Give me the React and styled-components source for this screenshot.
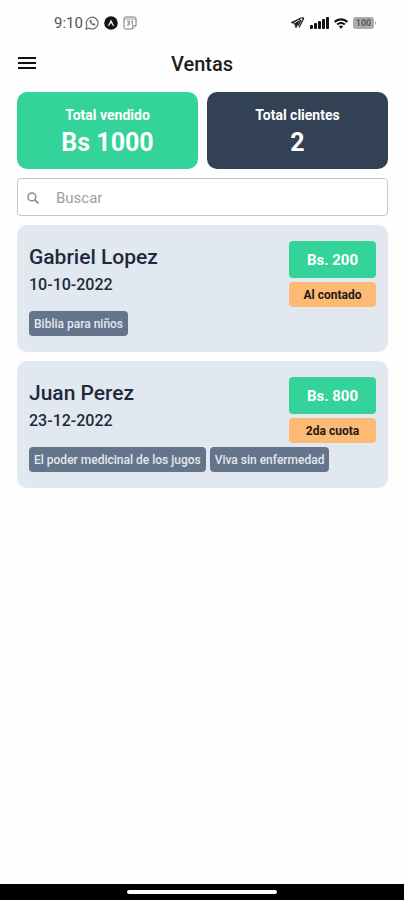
import React, { useState } from 'react';
import styled, { createGlobalStyle } from 'styled-components';

const GlobalStyle = createGlobalStyle`
  * {
    box-sizing: border-box;
  }
  body {
    margin: 0;
    background: #fefefe;
    font-family: Roboto, 'Liberation Sans', sans-serif;
    color: #1e293b;
  }
`;

const Screen = styled.div`
  min-height: 100vh;
  display: flex;
  flex-direction: column;
`;

const StatusBar = styled.div`
  display: flex;
  align-items: center;
  justify-content: space-between;
  height: 46px;
  padding: 0 27px 0 54px;
  font-size: 15px;
  color: #555;
`;

const StatusGroup = styled.div`
  display: flex;
  align-items: center;
  gap: ${(props) => props.$gap};
  svg {
    display: block;
  }
`;

const Header = styled.header`
  display: grid;
  grid-template-columns: 24px 1fr 24px;
  align-items: center;
  height: 36px;
  padding: 0 16px;
`;

const MenuButton = styled.button`
  display: flex;
  padding: 0;
  border: 0;
  background: none;
  color: #111;
`;

const Title = styled.h1`
  margin: 0;
  font-size: 20px;
  line-height: 24px;
  font-weight: 500;
  text-align: center;
  color: #1c1c1e;
`;

const Content = styled.main`
  flex: 1;
  display: flex;
  flex-direction: column;
  gap: 9px;
  padding: 10px 16px 10px 17px;
`;

const Totals = styled.div`
  display: grid;
  grid-template-columns: 1fr 1fr;
  gap: 9px;
`;

const TotalCard = styled.div`
  padding: 13px 12px 10px;
  border-radius: 10px;
  background: ${(props) => props.$color};
  color: #fff;
  text-align: center;
`;

const TotalLabel = styled.div`
  font-size: 14px;
  line-height: 21px;
  font-weight: 700;
`;

const TotalValue = styled.div`
  font-size: 25px;
  line-height: 33px;
  font-weight: 700;
`;

const SearchBox = styled.label`
  display: flex;
  align-items: center;
  gap: 17px;
  height: 38px;
  padding: 1px 9px 0;
  border: 1px solid #c4c6ca;
  border-radius: 4px;
  background: #fff;
  color: #8b8f9a;
`;

const SearchInput = styled.input`
  flex: 1;
  min-width: 0;
  padding: 0;
  border: 0;
  outline: 0;
  background: none;
  font: inherit;
  font-size: 15px;
  color: #1e293b;
  &::placeholder {
    color: #9a9ea6;
    opacity: 1;
  }
`;

const SaleCard = styled.article`
  display: flex;
  flex-direction: column;
  gap: 4px;
  padding: 16px 12px;
  border-radius: 10px;
  background: #e2e8f0;
`;

const SaleTop = styled.div`
  display: flex;
  justify-content: space-between;
`;

const ClientName = styled.h2`
  margin: 0;
  font-size: 21px;
  line-height: 32px;
  font-weight: 500;
`;

const SaleDate = styled.div`
  font-size: 16px;
  line-height: 24px;
  font-weight: 500;
`;

const Payment = styled.div`
  display: flex;
  flex-direction: column;
  gap: 4px;
  width: 87px;
  text-align: center;
  font-weight: 700;
`;

const Amount = styled.div`
  padding-top: 2px;
  border-radius: 4px;
  background: #34d399;
  color: #fff;
  font-size: 15px;
  line-height: 35px;
`;

const PaymentType = styled.div`
  padding-top: 2px;
  border-radius: 4px;
  background: #fdba74;
  color: #1c1917;
  font-size: 12px;
  line-height: 23px;
`;

const Tags = styled.div`
  display: flex;
  flex-wrap: wrap;
  gap: 4px;
`;

const Tag = styled.span`
  padding: 2px 5px 0;
  border-radius: 4px;
  background: #64748b;
  color: #e2e8f0;
  font-size: 12px;
  line-height: 23px;
  font-weight: 500;
`;

const NavigationBar = styled.footer`
  display: flex;
  align-items: center;
  justify-content: center;
  height: 16px;
  background: #000;
`;

const HomeIndicator = styled.div`
  width: 37%;
  height: 4px;
  border-radius: 2px;
  background: #fff;
`;

const WhatsappIcon = () => (
  <svg width="14" height="14" viewBox="0 0 14 14" fill="none" stroke="#666">
    <path d="M1 13l.9-3.2A5.9 5.9 0 1 1 4.200 12.200z" strokeWidth="1.100" />
    <path d="M4.700 4.200c0 2.800 2.200 5 5 5.100l.5-1.300-1.500-.8-.8.7c-.8-.4-1.300-.9-1.700-1.700l.6-.8-.7-1.500z" fill="#666" strokeWidth=".3" />
  </svg>
);

const ExpoIcon = () => (
  <svg width="14" height="14" viewBox="0 0 14 14">
    <circle cx="7" cy="7" r="6.800" fill="#151515" />
    <path d="M3.800 9.500c1.200-1.500 1.800-3.500 2.500-5 .4-.7 1-.7 1.400 0 .7 1.500 1.300 3.500 2.500 5-.9 1-1.600.2-2-.7L7 6.900l-1.200 1.900c-.4.900-1.100 1.700-2 .7z" fill="#e8e8e8" />
  </svg>
);

const CalendarIcon = () => (
  <svg width="14" height="14" viewBox="0 0 14 14" fill="none" stroke="#777">
    <path d="M2.500 1h9A1.500 1.500 0 0 1 13 2.500V9.500L9.500 13h-7A1.500 1.500 0 0 1 1 11.500v-9A1.500 1.500 0 0 1 2.500 1z" />
    <path d="M1 3h12M13 9.500H9.500V13" strokeWidth=".7" />
    <path d="M4 5h2.200v4H4M4.500 7h1.700M8 5.500l1.300-.6V9" strokeWidth=".9" />
  </svg>
);

const LocationIcon = () => (
  <svg width="15" height="12" viewBox="0 0 15 12" fill="none" stroke="#1c1c1c">
    <path d="M10.500 1L1 5.500l3.500 1.200L6 11z" fill="#1c1c1c" strokeWidth=".6" />
    <path d="M9 3L4 6.200" stroke="#fff" strokeWidth=".9" />
    <path d="M13.800 1L9 10.500M11 3L8 8.500" strokeWidth="1.300" />
    <path d="M10.500 1h3.500" strokeWidth="1.200" />
  </svg>
);

const SignalIcon = () => (
  <svg width="19" height="12" viewBox="0 0 19 12" fill="#111">
    <rect x="0" y="8" width="3" height="4" rx="1" />
    <rect x="4" y="6" width="3" height="6" rx="1" />
    <rect x="8" y="4" width="3" height="8" rx="1" />
    <rect x="12" y="2" width="3" height="10" rx="1" />
    <rect x="16" y="0" width="3" height="12" rx="1" />
  </svg>
);

const WifiIcon = () => (
  <svg width="14" height="11" viewBox="0 0 14 11" fill="none" stroke="#111" strokeWidth="2.100">
    <path d="M.7 3.900a9 9 0 0 1 12.600 0" />
    <path d="M3.200 6.600a5.500 5.500 0 0 1 7.600 0" />
    <path d="M7 10.800L4.800 8.500a3.200 3.200 0 0 1 4.400 0z" fill="#111" stroke="none" />
  </svg>
);

const BatteryIcon = () => (
  <svg width="24" height="12" viewBox="0 0 24 12">
    <rect width="21" height="12" rx="3" fill="#ababab" />
    <path d="M22 4q2 2 0 4z" fill="#999" />
    <text x="10.500" y="9" textAnchor="middle" fontSize="9" fontWeight="700" fill="#5c5c5c">100</text>
  </svg>
);

const MenuIcon = () => (
  <svg width="22" height="18" viewBox="0 0 22 18" stroke="currentColor" strokeWidth="2">
    <path d="M2 3h18M2 8h18M2 13h18" />
  </svg>
);

const SearchIcon = () => (
  <svg width="12" height="12" viewBox="0 0 12 12" fill="none" stroke="currentColor" strokeWidth="1.500">
    <circle cx="4.900" cy="4.900" r="3.900" />
    <path d="M7.800 7.800L11.300 11.300" strokeWidth="1.900" />
  </svg>
);

const sales = [
  {
    client: 'Gabriel Lopez',
    date: '10-10-2022',
    amount: 200,
    payment: 'Al contado',
    books: ['Biblia para niños'],
  },
  {
    client: 'Juan Perez',
    date: '23-12-2022',
    amount: 800,
    payment: '2da cuota',
    books: ['El poder medicinal de los jugos', 'Viva sin enfermedad'],
  },
];

const App = () => {
  const [search, setSearch] = useState('');
  const total = sales.reduce((sum, sale) => sum + sale.amount, 0);
  const visible = sales.filter((sale) =>
    sale.client.toLowerCase().includes(search.toLowerCase())
  );

  return (
    <Screen>
      <GlobalStyle />
      <StatusBar>
        <StatusGroup $gap="5px">
          <StatusGroup $gap="2px">
            <span>9:10</span>
            <WhatsappIcon />
          </StatusGroup>
          <ExpoIcon />
          <CalendarIcon />
        </StatusGroup>
        <StatusGroup $gap="5px">
          <LocationIcon />
          <SignalIcon />
          <WifiIcon />
          <BatteryIcon />
        </StatusGroup>
      </StatusBar>

      <Header>
        <MenuButton type="button" aria-label="Menú">
          <MenuIcon />
        </MenuButton>
        <Title>Ventas</Title>
      </Header>

      <Content>
        <Totals>
          <TotalCard $color="#34d399">
            <TotalLabel>Total vendido</TotalLabel>
            <TotalValue>Bs {total}</TotalValue>
          </TotalCard>
          <TotalCard $color="#334155">
            <TotalLabel>Total clientes</TotalLabel>
            <TotalValue>{sales.length}</TotalValue>
          </TotalCard>
        </Totals>

        <SearchBox>
          <SearchIcon />
          <SearchInput
            aria-label="Buscar"
            placeholder="Buscar"
            value={search}
            onChange={(e) => setSearch(e.target.value)}
          />
        </SearchBox>

        {visible.map((sale) => (
          <SaleCard key={sale.client}>
            <SaleTop>
              <div>
                <ClientName>{sale.client}</ClientName>
                <SaleDate>{sale.date}</SaleDate>
              </div>
              <Payment>
                <Amount>Bs. {sale.amount}</Amount>
                <PaymentType>{sale.payment}</PaymentType>
              </Payment>
            </SaleTop>
            <Tags>
              {sale.books.map((book) => (
                <Tag key={book}>{book}</Tag>
              ))}
            </Tags>
          </SaleCard>
        ))}
      </Content>

      <NavigationBar>
        <HomeIndicator />
      </NavigationBar>
    </Screen>
  );
};

export default App;
